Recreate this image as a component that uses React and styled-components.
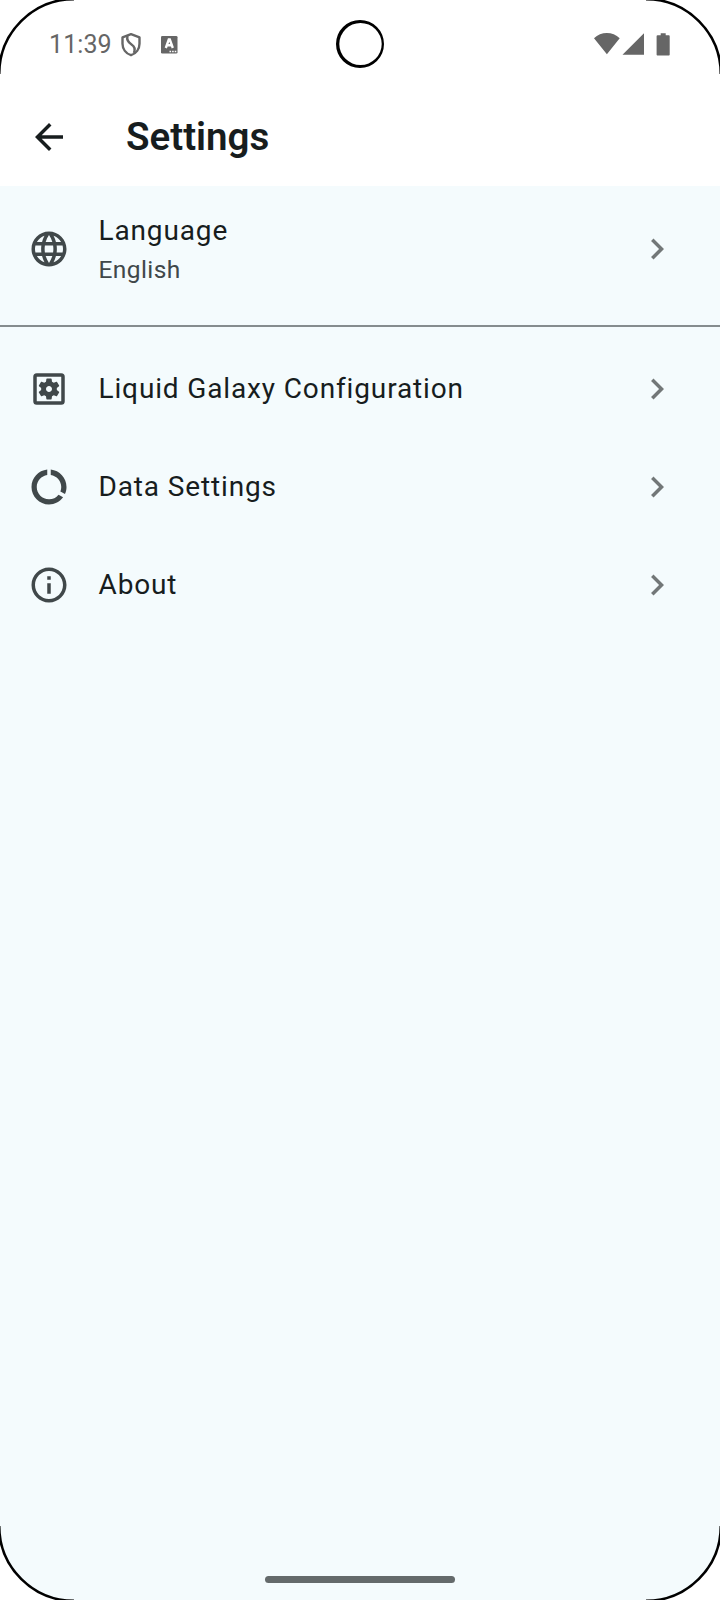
import React from 'react';
import styled, { createGlobalStyle } from 'styled-components';
import {
  MdArrowBack,
  MdChevronRight,
  MdDataUsage,
  MdLanguage,
  MdOutlineInfo,
  MdOutlineSettingsApplications,
} from 'react-icons/md';

const GlobalStyle = createGlobalStyle`
  * { box-sizing: border-box; }
  body { margin: 0; background: #fff; }
`;

const Screen = styled.div`
  position: relative;
  display: flex;
  flex-direction: column;
  width: 720px;
  height: 1600px;
  overflow: hidden;
  background: #f4fbfd;
  color: #171d1e;
  font-family: Roboto, 'Liberation Sans', sans-serif;
`;

const StatusBar = styled.div`
  display: grid;
  grid-template-columns: 1fr 50px 1fr;
  align-items: center;
  height: 88px;
  padding: 0 49px;
  background: #fff;
  color: #666;
`;

const StatusGroup = styled.div`
  display: flex;
  align-items: center;
  justify-content: ${({ $end }) => ($end ? 'flex-end' : 'flex-start')};
  svg { display: block; flex: none; }
`;

const Clock = styled.span`
  width: 71px;
  padding-top: 2px;
  font-size: 25px;
  font-weight: 380;
  line-height: 30px;
  letter-spacing: 0.1px;
  white-space: nowrap;
`;

const Camera = styled.svg`
  display: block;
`;

const AppBar = styled.header`
  display: flex;
  align-items: center;
  gap: 56px;
  height: 98px;
  padding: 0 28px;
  background: #fff;
`;

const BackButton = styled.button`
  display: flex;
  padding: 0;
  border: 0;
  background: none;
  color: #171d1e;
`;

const Title = styled.h1`
  margin: 0 0 1px;
  font-size: 38.5px;
  font-weight: 570;
  line-height: 49px;
`;

const Row = styled.div`
  display: flex;
  align-items: center;
  gap: 28.5px;
  height: ${({ $tall }) => ($tall ? 126 : 98)}px;
  padding: 0 42px 0 28px;
  color: #40484a;
  svg { flex: none; }
`;

const Labels = styled.div`
  display: flex;
  flex: 1;
  flex-direction: column;
  padding-top: ${({ $tall }) => ($tall ? 2 : 0)}px;
`;

const Label = styled.span`
  color: #171d1e;
  font-size: 28px;
  line-height: ${({ $tight }) => ($tight ? 40 : 42)}px;
  letter-spacing: 0.86px;
`;

const Detail = styled.span`
  font-size: 24.5px;
  line-height: 38px;
  letter-spacing: 0.4px;
`;

const Chevron = styled(MdChevronRight)`
  color: #727778;
`;

const Divider = styled.hr`
  width: 100%;
  height: 2px;
  margin: 13px 0;
  border: 0;
  background: #858c8e;
`;

const HomeIndicator = styled.div`
  width: 190px;
  height: 7px;
  margin: auto auto 17px;
  border-radius: 4px;
  background: #646a6b;
`;

const Corner = styled.svg`
  position: absolute;
  top: ${({ $bottom }) => ($bottom ? 'auto' : 0)};
  bottom: ${({ $bottom }) => ($bottom ? 0 : 'auto')};
  left: ${({ $right }) => ($right ? 'auto' : 0)};
  right: ${({ $right }) => ($right ? 0 : 'auto')};
  transform: scale(${({ $right }) => ($right ? -1 : 1)}, ${({ $bottom }) => ($bottom ? -1 : 1)});
`;

const CORNERS = [
  {},
  { $right: true },
  { $bottom: true },
  { $right: true, $bottom: true },
];

const ROWS = [
  { icon: MdOutlineSettingsApplications, label: 'Liquid Galaxy Configuration' },
  { icon: MdDataUsage, label: 'Data Settings' },
  { icon: MdOutlineInfo, label: 'About' },
];

function SettingsRow({ icon: Icon, label, detail }) {
  return (
    <Row $tall={Boolean(detail)}>
      <Icon size={42} />
      <Labels $tall={Boolean(detail)}>
        <Label $tight={Boolean(detail)}>{label}</Label>
        {detail && <Detail>{detail}</Detail>}
      </Labels>
      <Chevron size={42} />
    </Row>
  );
}

export default function App() {
  return (
    <>
      <GlobalStyle />
      <Screen>
        <StatusBar>
          <StatusGroup>
            <Clock>11:39</Clock>
            <svg width="22" height="26" viewBox="0 -1 22 26" fill="none" stroke="currentColor" strokeWidth="2.4">
              <path d="M11 2.200 19.500 5.400v6.300c0 5.200-3.400 9.800-8.500 11.500C5.900 21.500 2.500 16.900 2.500 11.700V5.400Z" strokeLinejoin="round" />
              <path d="M7.500 4c-1.200 4.300.7 6.300 4 8.400 3.300 2 4 4.600 2.400 8.600" />
            </svg>
            <svg width="36" height="26" viewBox="0 0 36 26">
              <rect x="19" y="5" width="16.500" height="17.500" rx="1.300" fill="currentColor" />
              <path d="m23.800 17 3-8.500h1l3 8.500M24.900 14.200h5" fill="none" stroke="#fff" strokeWidth="2.4" />
              <path d="M27.500 20.400h7" stroke="#fff" strokeWidth="1.500" strokeDasharray="1.600 1" />
            </svg>
          </StatusGroup>
          <Camera width="50" height="50" viewBox="0 0 50 50">
            <path fill="#000" fillRule="evenodd" d="M25 1a24 24 0 1 1 0 48 24 24 0 0 1 0-48Zm.5 3a21.200 21 0 1 0 0 42 21.200 21 0 0 0 0-42Z" />
          </Camera>
          <StatusGroup $end>
            <svg width="77" height="26" viewBox="0 0 77 26" fill="currentColor">
              <path d="M0 7.200C7 .2 18.700.2 25.700 7.200L12.900 23.300ZM28.500 23.800 50 2.200v21.600ZM64.200 4.200h2.500V2.200h5v2h3c.6 0 1 .5 1 1v18.200c0 .7-.5 1.200-1 1.200H63.800c-.7 0-1.200-.5-1.200-1.200V5.200c0-.6.5-1 1.600-1Z" />
            </svg>
          </StatusGroup>
        </StatusBar>
        <AppBar>
          <BackButton aria-label="Back">
            <MdArrowBack size={42} />
          </BackButton>
          <Title>Settings</Title>
        </AppBar>
        <SettingsRow icon={MdLanguage} label="Language" detail="English" />
        <Divider />
        {ROWS.map((row) => (
          <SettingsRow key={row.label} {...row} />
        ))}
        <HomeIndicator />
        {CORNERS.map((corner, i) => (
          <Corner key={i} {...corner} width="80" height="80" viewBox="0 0 80 80">
            <path d="M0 0H74V-.8A74.800 74.800 0 0 0-.8 74H0Z" fill="#fff" />
            <path d="M-.8 74A74.800 74.800 0 0 1 74-.8" fill="none" stroke="#000" strokeWidth="2.600" />
          </Corner>
        ))}
      </Screen>
    </>
  );
}
